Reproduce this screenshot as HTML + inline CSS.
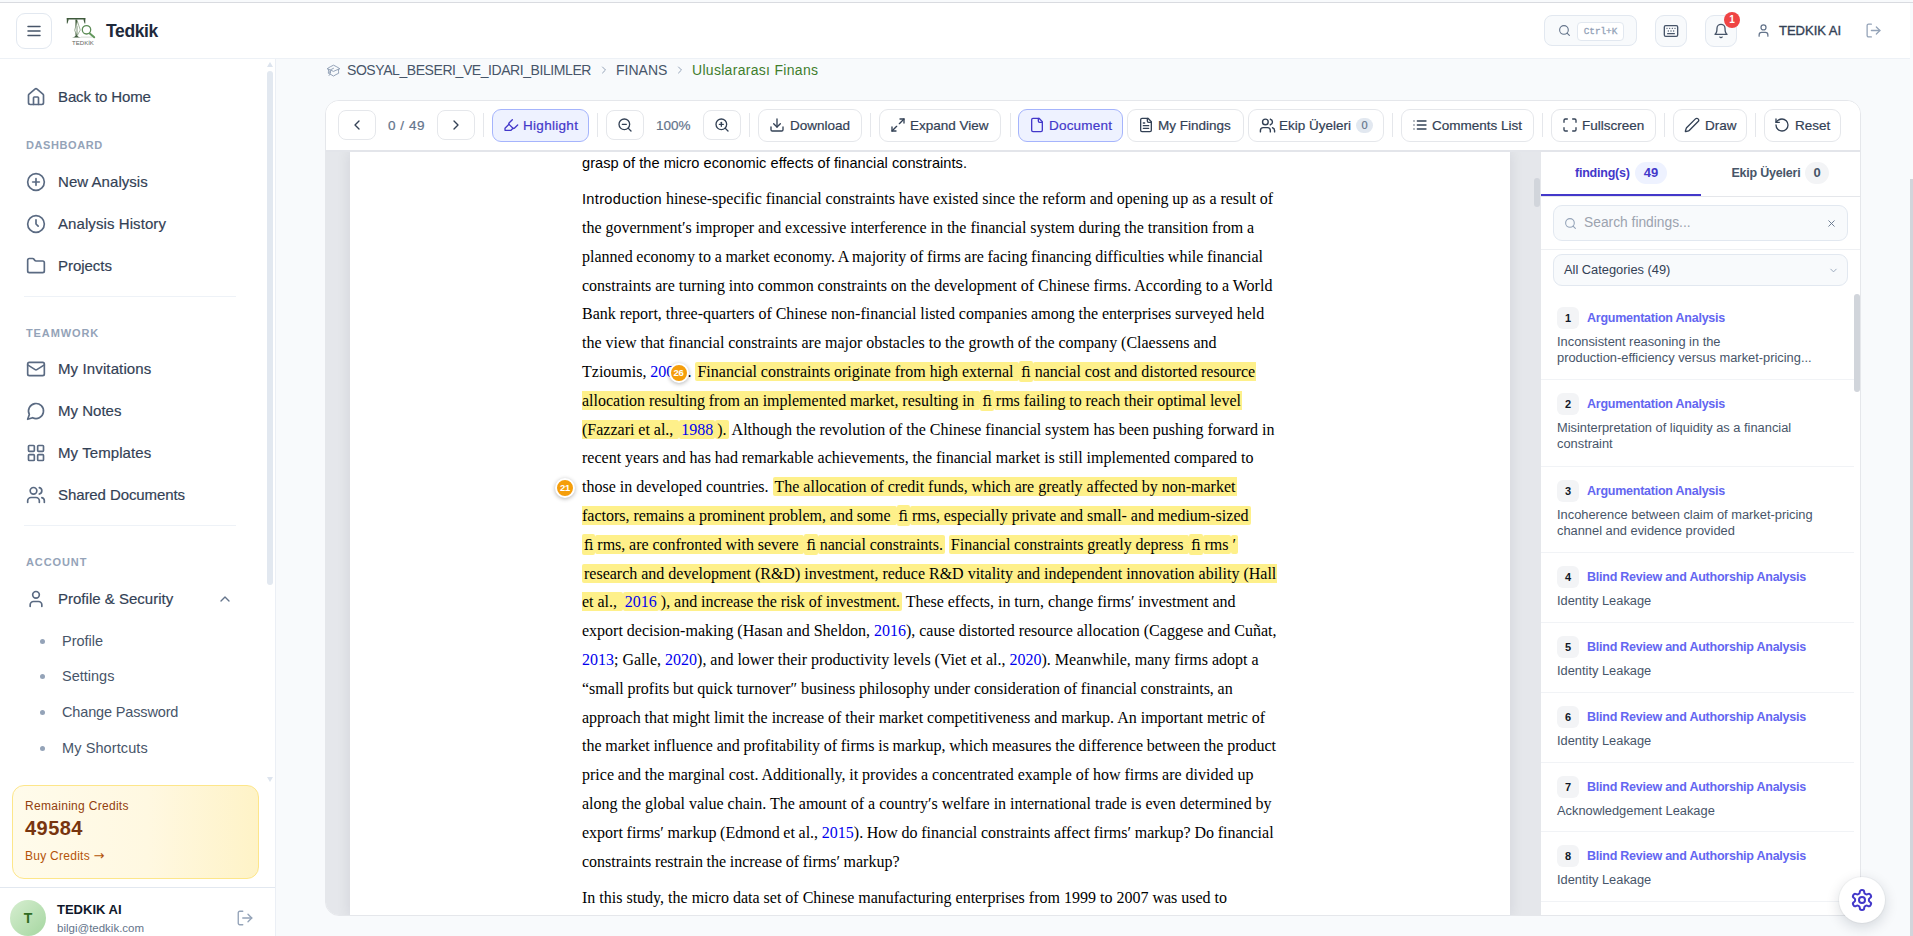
<!DOCTYPE html>
<html lang="en">
<head>
<meta charset="utf-8">
<title>Tedkik</title>
<style>
*{box-sizing:border-box;margin:0;padding:0}
html,body{width:1913px;height:936px;overflow:hidden;background:#f8fafc;font-family:"Liberation Sans",sans-serif;color:#334155}
body{position:relative}
svg{display:block;fill:none;stroke:currentColor;stroke-width:2;stroke-linecap:round;stroke-linejoin:round}
.abs{position:absolute}
.topline{position:absolute;left:0;top:2px;width:1913px;height:1px;background:#d9dbe0}
/* header */
header{position:absolute;left:0;top:3px;width:1910px;height:56px;background:#fff;border-bottom:1px solid #edf1f6}
.hbtn{position:absolute;border:1px solid #e2e8f0;border-radius:9px;background:#fff;color:#475569}
.brand{position:absolute;left:106px;top:16.5px;font-size:17.5px;font-weight:700;color:#1e293b;letter-spacing:-.36px;line-height:22px}
/* sidebar */
aside{position:absolute;left:0;top:59px;width:276px;height:877px;background:#fff;border-right:1px solid #ebeff5}
.nav{position:absolute;left:26px;height:24px;display:flex;align-items:center;color:#334155;font-size:15px;white-space:nowrap;-webkit-text-stroke:.18px #334155}
.nav span{position:relative;top:-1px}
.nav svg{width:20px;height:20px;color:#5a6a82;margin-right:12px;stroke-width:2}
.sect{position:absolute;left:26px;font-size:11px;font-weight:700;letter-spacing:.9px;color:#94a3b8;line-height:12px}
.sep{position:absolute;left:24px;width:212px;height:1px;background:#eef2f7}
.sub{position:absolute;left:62px;font-size:14.5px;color:#475569;line-height:18px;white-space:nowrap}
.sub:before{content:"";position:absolute;left:-22px;top:7px;width:5px;height:5px;border-radius:50%;background:#94a3b8}

/* breadcrumb */
.crumb{position:absolute;top:62px;height:16px;font-size:14px;line-height:16px;color:#475569;white-space:nowrap}
/* card */
.card{position:absolute;left:325px;top:100px;width:1536px;height:816px;background:#fff;border:1px solid #e5e7eb;border-radius:14px;overflow:hidden}
.tb{position:absolute;left:0;top:0;width:1534px;height:51px;border-bottom:2px solid #e3e5ea;background:#fff;z-index:3}
.b{position:absolute;top:8px;height:33px;-webkit-text-stroke:.2px currentColor;border:1px solid #e5e7eb;border-radius:9px;background:#fff;color:#334155;font-size:13.5px;line-height:30px;white-space:nowrap}
.b svg{position:absolute;top:7px;width:16px;height:16px;margin-left:-1px}
.b span{position:absolute;top:1px}
.b.sq{top:9px;height:30px;width:37.5px;border-radius:8px}
.b.sq svg{left:11px;top:6px}
.b.on{background:#eef2ff;border-color:#a5b4fc;color:#4338ca}
.dv{position:absolute;top:12px;width:1px;height:24px;background:#e5e7eb}
.tt{position:absolute;top:16.5px;-webkit-text-stroke:.2px #64748b;font-size:13.5px;line-height:16px;color:#64748b;white-space:nowrap}

/* document */
.doc{position:absolute;left:0;top:50px;width:1214px;height:766px;background:#e5e7eb;overflow:hidden}
.page{position:absolute;left:24px;top:0;width:1160px;height:766px;background:#fff;box-shadow:0 0 14px rgba(15,23,42,.09)}
.para{position:absolute;left:232px;font-family:"Liberation Serif",serif;font-size:16px;line-height:28.8px;color:#000;white-space:nowrap}
.para .sans{font-family:"Liberation Sans",sans-serif;font-size:14.6px;letter-spacing:.04px}
.para .sans.in{letter-spacing:.31px}
.para a{color:#0000ee;text-decoration:none}
mark{background:#fef08a;color:inherit;padding:1px 2px;border-radius:2px}
mark.c0{padding-left:0;border-top-left-radius:0;border-bottom-left-radius:0}
mark.c1{padding-right:1px;border-top-right-radius:0;border-bottom-right-radius:0}
mark.fi{font-family:"DejaVu Serif",serif;font-size:14px;padding:3px 2px 2px}
.pin{position:absolute;width:20px;height:20px;border-radius:50%;background:#f59e0b;border:2px solid #fff;box-shadow:0 1px 4px rgba(0,0,0,.3);color:#fff;font-family:"Liberation Sans",sans-serif;font-size:9.5px;font-weight:700;line-height:16px;text-align:center;letter-spacing:-.3px}
/* findings */
.find{position:absolute;left:1214px;top:50px;width:320px;height:766px;background:#fff;border-left:1px solid #e5e7eb;overflow:hidden}
.tab{position:absolute;top:14px;font-size:12.5px;letter-spacing:-.22px;font-weight:700;line-height:16px;white-space:nowrap}
.pill{position:absolute;top:11px;height:22px;border-radius:11px;font-size:13px;font-weight:700;line-height:22px;text-align:center}
.fi-n{position:absolute;left:16px;width:22px;height:22px;border-radius:6px;background:#f3f4f6;color:#111827;font-size:11px;font-weight:700;line-height:22px;text-align:center}
.fi-t{position:absolute;left:46px;font-size:12.5px;font-weight:700;letter-spacing:-.24px;line-height:16px;color:#6366f1;white-space:nowrap}
.fi-d{position:absolute;left:16px;font-size:12.85px;line-height:16.3px;color:#475569;white-space:nowrap}
.fi-s{position:absolute;left:0;width:313px;height:1px;background:#f1f3f6}
</style>
</head>
<body>
<div class="topline"></div>
<header>
  <div class="hbtn" style="left:16px;top:10px;width:36px;height:36px"><svg viewBox="0 0 24 24" style="width:18px;height:18px;margin:8px"><path d="M4 6h16M4 12h16M4 18h16"/></svg></div>
  <div class="brand">Tedkik</div>

  <svg class="abs logo" viewBox="0 0 30 29" style="left:66px;top:14px;width:30px;height:29px;stroke:none">
    <g fill="#3f5a3c"><rect x=".8" y="1" width="18.5" height="1.5"/><path d="M.8 1v5.6h.7l1.2-4.1zM19.3 1v5.6h-.7l-1.2-4.1z"/><path d="M9.4 2.5h1.9l-.15 16.8h-1.6z"/><path d="M6 20.6c1.6-.3 2.7-.8 3.3-1.5h2.2c.6.7 1.9 1.2 3.8 1.5z"/></g>
    <path d="M11.3 4.6 L8.5 13.4 L11.3 18.4 L14.1 13.4 Z" fill="#fff" fill-opacity=".72" stroke="#7f9879" stroke-width=".7"/>
    <path d="M11.3 9.6V18" stroke="#7f9879" stroke-width=".6"/>
    <path d="M15.3 20.1H26" stroke="#a9b5a6" stroke-width=".5"/>
    <circle cx="20.5" cy="12.8" r="4.2" fill="#fff" fill-opacity=".55" stroke="#5d8c57" stroke-width="1.3"/>
    <path d="M23.8 16.4 L28.2 20.3" stroke="#62985c" stroke-width="2" stroke-linecap="round"/>
    <text x="6" y="27.8" textLength="21.9" lengthAdjust="spacingAndGlyphs" font-family="Liberation Sans, sans-serif" font-size="6" fill="#5f6660">TEDKİK</text>
  </svg>
  <div class="hbtn" style="left:1544px;top:12px;width:93px;height:31px;background:#f8fafc;border-radius:8px">
    <svg viewBox="0 0 24 24" style="position:absolute;left:13px;top:8px;width:13px;height:13px;color:#64748b"><circle cx="11" cy="11" r="8"/><path d="m21 21-4.3-4.3"/></svg>
    <span style="position:absolute;left:32px;top:5.5px;width:47px;height:19px;border:1px solid #e2e8f0;border-radius:4px;background:#fff;font-family:'Liberation Mono',monospace;font-size:9.3px;-webkit-text-stroke:.3px #94a3b8;line-height:18px;text-align:center;color:#94a3b8">Ctrl+K</span>
  </div>
  <div class="hbtn" style="left:1655px;top:12px;width:32px;height:32px;background:#f8fafc;border-radius:9px">
    <svg viewBox="0 0 24 24" style="margin:7px;width:16px;height:16px;color:#475569"><rect width="20" height="16" x="2" y="4" rx="2"/><path d="M6 8h.01M10 8h.01M14 8h.01M18 8h.01M8 12h.01M12 12h.01M16 12h.01M7 16h10"/></svg>
  </div>
  <div class="hbtn" style="left:1705px;top:12px;width:32px;height:32px;background:#f8fafc;border-radius:9px">
    <svg viewBox="0 0 24 24" style="margin:7px;width:16px;height:16px;color:#475569"><path d="M6 8a6 6 0 0 1 12 0c0 7 3 9 3 9H3s3-2 3-9"/><path d="M10.3 21a1.94 1.94 0 0 0 3.4 0"/></svg>
    <span style="position:absolute;left:18px;top:-4px;width:16px;height:16px;border-radius:50%;background:#ef4444;color:#fff;font-size:10px;font-weight:700;line-height:16px;text-align:center">1</span>
  </div>
  <svg class="abs" viewBox="0 0 24 24" style="left:1756px;top:20px;width:15px;height:15px;color:#64748b"><path d="M19 21v-2a4 4 0 0 0-4-4H9a4 4 0 0 0-4 4v2"/><circle cx="12" cy="7" r="4"/></svg>
  <div class="abs" style="left:1779px;top:20px;font-size:13px;font-weight:500;color:#334155;-webkit-text-stroke:.35px #334155;line-height:16px;white-space:nowrap">TEDKIK AI</div>
  <svg class="abs" viewBox="0 0 24 24" style="left:1865px;top:19px;width:17px;height:17px;color:#94a3b8;stroke-width:1.8"><path d="M9 21H5a2 2 0 0 1-2-2V5a2 2 0 0 1 2-2h4"/><path d="m16 17 5-5-5-5"/><path d="M21 12H9"/></svg>
</header>
<aside>
  <div class="nav" style="top:26px"><svg viewBox="0 0 24 24"><path d="M15 21v-8a1 1 0 0 0-1-1h-4a1 1 0 0 0-1 1v8"/><path d="M3 10a2 2 0 0 1 .709-1.528l7-5.999a2 2 0 0 1 2.582 0l7 5.999A2 2 0 0 1 21 10v9a2 2 0 0 1-2 2H5a2 2 0 0 1-2-2z"/></svg><span style="letter-spacing:-0.12px">Back to Home</span></div>
  <div class="sect" style="top:80px;letter-spacing:.58px">DASHBOARD</div>
  <div class="nav" style="top:111px"><svg viewBox="0 0 24 24"><circle cx="12" cy="12" r="10"/><path d="M8 12h8"/><path d="M12 8v8"/></svg><span style="letter-spacing:0.05px">New Analysis</span></div>
  <div class="nav" style="top:153px"><svg viewBox="0 0 24 24"><circle cx="12" cy="12" r="10"/><path d="M12 7v5l2.6 2.6"/></svg><span style="letter-spacing:0.08px">Analysis History</span></div>
  <div class="nav" style="top:195px"><svg viewBox="0 0 24 24"><path d="M20 20a2 2 0 0 0 2-2V8a2 2 0 0 0-2-2h-7.9a2 2 0 0 1-1.69-.9L9.6 3.9A2 2 0 0 0 7.93 3H4a2 2 0 0 0-2 2v13a2 2 0 0 0 2 2Z"/></svg><span style="letter-spacing:-0.03px">Projects</span></div>
  <div class="sep" style="top:237px"></div>
  <div class="sect" style="top:268px">TEAMWORK</div>
  <div class="nav" style="top:298px"><svg viewBox="0 0 24 24"><rect width="20" height="16" x="2" y="4" rx="2"/><path d="m22 7-8.97 5.7a1.94 1.94 0 0 1-2.06 0L2 7"/></svg><span style="letter-spacing:0.12px">My Invitations</span></div>
  <div class="nav" style="top:340px"><svg viewBox="0 0 24 24"><path d="M7.9 20A9 9 0 1 0 4 16.1L2 22Z"/></svg><span style="letter-spacing:0.01px">My Notes</span></div>
  <div class="nav" style="top:382px"><svg viewBox="0 0 24 24"><rect width="7" height="7" x="3" y="3" rx="1"/><rect width="7" height="7" x="14" y="3" rx="1"/><rect width="7" height="7" x="14" y="14" rx="1"/><rect width="7" height="7" x="3" y="14" rx="1"/></svg><span style="letter-spacing:0.09px">My Templates</span></div>
  <div class="nav" style="top:424px"><svg viewBox="0 0 24 24"><path d="M16 21v-2a4 4 0 0 0-4-4H6a4 4 0 0 0-4 4v2"/><circle cx="9" cy="7" r="4"/><path d="M22 21v-2a4 4 0 0 0-3-3.87"/><path d="M16 3.13a4 4 0 0 1 0 7.75"/></svg><span style="letter-spacing:-0.09px">Shared Documents</span></div>
  <div class="sep" style="top:466px"></div>
  <div class="sect" style="top:497px">ACCOUNT</div>
  <div class="nav" style="top:528px"><svg viewBox="0 0 24 24"><path d="M19 21v-2a4 4 0 0 0-4-4H9a4 4 0 0 0-4 4v2"/><circle cx="12" cy="7" r="4"/></svg><span style="letter-spacing:0.01px">Profile &amp; Security</span></div>
  <svg class="abs" viewBox="0 0 24 24" style="left:217px;top:532px;width:16px;height:16px;color:#64748b"><path d="m18 15-6-6-6 6"/></svg>
  <div class="sub" style="top:573px">Profile</div>
  <div class="sub" style="top:608px">Settings</div>
  <div class="sub" style="top:644px;letter-spacing:-0.15px">Change Password</div>
  <div class="sub" style="top:680px;letter-spacing:0.10px">My Shortcuts</div>
  <div class="abs" style="left:267px;top:12px;width:6px;height:514px;border-radius:3px;background:#e2e8f0"></div>
  <div class="abs" style="left:266.5px;top:2.5px;width:0;height:0;border-left:3.5px solid transparent;border-right:3.5px solid transparent;border-bottom:5px solid #dde4ee"></div>
  <div class="abs" style="left:266.5px;top:717.5px;width:0;height:0;border-left:3.5px solid transparent;border-right:3.5px solid transparent;border-top:5px solid #dde4ee"></div>
  <div class="abs credits" style="left:12px;top:726px;width:247px;height:94px;border:1px solid #fde68a;border-radius:12px;background:linear-gradient(90deg,#fffbeb 0%,#fff8e1 55%,#fef3c7 100%)">
    <div class="abs" style="left:12px;top:13px;font-size:12px;letter-spacing:.3px;line-height:14px;color:#92400e;white-space:nowrap">Remaining Credits</div>
    <div class="abs" style="left:12px;top:31px;font-size:20px;font-weight:700;line-height:22px;color:#78350f;letter-spacing:.45px">49584</div>
    <div class="abs" style="left:12px;top:63px;font-size:12px;letter-spacing:.27px;line-height:14px;color:#b45309;white-space:nowrap">Buy Credits <span style="font-family:'DejaVu Sans',sans-serif;font-size:13px;letter-spacing:0">→</span></div>
  </div>
  <div class="abs" style="left:0;top:828px;width:275px;height:1px;background:#e2e8f0"></div>
  <div class="abs" style="left:10px;top:841px;width:36px;height:36px;border-radius:50%;background:linear-gradient(135deg,#d6eed0,#a5d6a0);color:#2f6b22;font-size:14px;font-weight:700;line-height:36px;text-align:center">T</div>
  <div class="abs" style="left:57px;top:843px;font-size:13px;font-weight:700;line-height:15px;color:#0f172a;white-space:nowrap">TEDKIK AI</div>
  <div class="abs" style="left:57px;top:862px;font-size:11.5px;line-height:14px;color:#64748b;white-space:nowrap">bilgi@tedkik.com</div>
  <svg class="abs" viewBox="0 0 24 24" style="left:236px;top:850px;width:18px;height:18px;color:#94a3b8;stroke-width:1.8"><path d="M9 21H5a2 2 0 0 1-2-2V5a2 2 0 0 1 2-2h4"/><path d="m16 17 5-5-5-5"/><path d="M21 12H9"/></svg>
</aside>
<nav class="crumbs">
  <svg class="abs" viewBox="0 0 24 24" style="left:325.5px;top:62.5px;width:15px;height:15px;color:#94a3b8;stroke-width:1.6"><path d="M4.26 10.147a60.438 60.438 0 0 0-.491 6.347A48.62 48.62 0 0 1 12 20.904a48.62 48.62 0 0 1 8.232-4.41 60.46 60.46 0 0 0-.491-6.347m-15.482 0a50.636 50.636 0 0 0-2.658-.813A59.906 59.906 0 0 1 12 3.493a59.903 59.903 0 0 1 10.399 5.84c-.896.248-1.783.52-2.658.814m-15.482 0A50.717 50.717 0 0 1 12 13.489a50.702 50.702 0 0 1 7.74-3.342M6.75 15a.75.75 0 1 0 0-1.5.75.75 0 0 0 0 1.5Zm0 0v-3.675A55.378 55.378 0 0 1 12 8.443m-7.007 11.55A5.981 5.981 0 0 0 6.75 15.75v-1.5"/></svg>
  <div class="crumb" style="left:347px;letter-spacing:-.43px">SOSYAL_BESERI_VE_IDARI_BILIMLER</div>
  <svg class="abs" viewBox="0 0 24 24" style="left:598px;top:64px;width:12px;height:12px;color:#94a3b8"><path d="m9 18 6-6-6-6"/></svg>
  <div class="crumb" style="left:616px">FINANS</div>
  <svg class="abs" viewBox="0 0 24 24" style="left:674px;top:64px;width:12px;height:12px;color:#94a3b8"><path d="m9 18 6-6-6-6"/></svg>
  <div class="crumb" style="left:692px;color:#3f7d2c;letter-spacing:.3px">Uluslararası Finans</div>
</nav>
<main class="card">
  <div class="tb">
    <div class="b sq" style="left:12px"><svg viewBox="0 0 24 24"><path d="m15 18-6-6 6-6"/></svg></div>
    <div class="tt" style="left:62px;letter-spacing:.55px">0 / 49</div>
    <div class="b sq" style="left:111px"><svg viewBox="0 0 24 24"><path d="m9 18 6-6-6-6"/></svg></div>
    <div class="dv" style="left:157px"></div>
    <div class="b on" style="left:166px;width:97px"><svg viewBox="0 0 24 24" style="left:11px"><path d="m9 11-6 6v3h9l3-3"/><path d="m22 12-4.6 4.6a2 2 0 0 1-2.8 0l-5.2-5.2a2 2 0 0 1 0-2.8L14 4"/></svg><span style="left:30px;letter-spacing:.3px">Highlight</span></div>
    <div class="dv" style="left:271px"></div>
    <div class="b sq" style="left:280px"><svg viewBox="0 0 24 24"><circle cx="11" cy="11" r="8"/><path d="m21 21-4.35-4.35"/><path d="M8 11h6"/></svg></div>
    <div class="tt" style="left:330px">100%</div>
    <div class="b sq" style="left:377px"><svg viewBox="0 0 24 24"><circle cx="11" cy="11" r="8"/><path d="m21 21-4.35-4.35"/><path d="M8 11h6"/><path d="M11 8v6"/></svg></div>
    <div class="dv" style="left:423px"></div>
    <div class="b " style="left:432px;width:104px"><svg viewBox="0 0 24 24" style="left:11px"><path d="M21 15v4a2 2 0 0 1-2 2H5a2 2 0 0 1-2-2v-4"/><path d="m7 10 5 5 5-5"/><path d="M12 15V3"/></svg><span style="left:31px">Download</span></div>
    <div class="dv" style="left:544px"></div>
    <div class="b " style="left:553px;width:122px"><svg viewBox="0 0 24 24" style="left:11px"><path d="M15 3h6v6"/><path d="M9 21H3v-6"/><path d="M21 3l-7 7"/><path d="M3 21l7-7"/></svg><span style="left:30px">Expand View</span></div>
    <div class="dv" style="left:684px"></div>
    <div class="b on" style="left:692px;width:105px"><svg viewBox="0 0 24 24" style="left:11px"><path d="M15 2H6a2 2 0 0 0-2 2v16a2 2 0 0 0 2 2h12a2 2 0 0 0 2-2V7Z"/><path d="M14 2v4a2 2 0 0 0 2 2h4"/></svg><span style="left:30px;letter-spacing:.2px">Document</span></div>
    <div class="b " style="left:801px;width:117px"><svg viewBox="0 0 24 24" style="left:11px"><path d="M15 2H6a2 2 0 0 0-2 2v16a2 2 0 0 0 2 2h12a2 2 0 0 0 2-2V7Z"/><path d="M14 2v4a2 2 0 0 0 2 2h4"/><path d="M10 9H8"/><path d="M16 13H8"/><path d="M16 17H8"/></svg><span style="left:30px">My Findings</span></div>
    <div class="b " style="left:922px;width:136px"><svg viewBox="0 0 24 24" style="left:10.5px;top:7px;width:17px;height:17px"><path d="M16 21v-2a4 4 0 0 0-4-4H6a4 4 0 0 0-4 4v2"/><circle cx="9" cy="7" r="4"/><path d="M22 21v-2a4 4 0 0 0-3-3.87"/><path d="M16 3.13a4 4 0 0 1 0 7.75"/></svg><span style="left:30px">Ekip Üyeleri</span><i style="position:absolute;left:107px;top:8px;width:17px;height:15px;border-radius:8px;background:#e2e8f0;color:#64748b;font-size:11px;font-style:normal;font-weight:400;-webkit-text-stroke:.2px #64748b;line-height:15.5px;text-align:center">0</i></div>
    <div class="dv" style="left:1066px"></div>
    <div class="b " style="left:1075px;width:133px"><svg viewBox="0 0 24 24" style="left:11px"><path d="M8 6h13M8 12h13M8 18h13M3 6h.01M3 12h.01M3 18h.01"/></svg><span style="left:30px">Comments List</span></div>
    <div class="dv" style="left:1216px"></div>
    <div class="b " style="left:1225px;width:105px"><svg viewBox="0 0 24 24" style="left:11px"><path d="M8 3H5a2 2 0 0 0-2 2v3"/><path d="M21 8V5a2 2 0 0 0-2-2h-3"/><path d="M3 16v3a2 2 0 0 0 2 2h3"/><path d="M16 21h3a2 2 0 0 0 2-2v-3"/></svg><span style="left:30px">Fullscreen</span></div>
    <div class="dv" style="left:1338px"></div>
    <div class="b " style="left:1347px;width:74px"><svg viewBox="0 0 24 24" style="left:11px"><path d="M21.174 6.812a1 1 0 0 0-3.986-3.987L3.842 16.174a2 2 0 0 0-.5.83l-1.321 4.352a.5.5 0 0 0 .623.622l4.353-1.32a2 2 0 0 0 .83-.497z"/></svg><span style="left:31px">Draw</span></div>
    <div class="dv" style="left:1429px"></div>
    <div class="b " style="left:1438px;width:77px"><svg viewBox="0 0 24 24" style="left:10px"><path d="M3 12a9 9 0 1 0 9-9 9.75 9.75 0 0 0-6.74 2.74L3 8"/><path d="M3 3v5h5"/></svg><span style="left:30px">Reset</span></div>
  </div>
  <section class="doc">
    <article class="page">
      <p class="para" style="top:-2.4px"><span class="sans">grasp of the micro economic effects of financial constraints.</span></p>
      <p class="para" style="top:34.2px">
        <span class="ln" id="L1" style="word-spacing:-0.097px"><span class="sans in">Introduction</span> hinese-specific financial constraints have existed since the reform and opening up as a result of</span><br>
        <span class="ln" id="L2" style="word-spacing:-0.093px">the government′s improper and excessive interference in the financial system during the transition from a</span><br>
        <span class="ln" id="L3" style="word-spacing:-0.364px">planned economy to a market economy. A majority of firms are facing financing difficulties while financial</span><br>
        <span class="ln" id="L4" style="word-spacing:-0.081px">constraints are turning into common constraints on the development of Chinese firms. According to a World</span><br>
        <span class="ln" id="L5" style="word-spacing:-0.123px">Bank report, three-quarters of Chinese non-financial listed companies among the enterprises surveyed held</span><br>
        <span class="ln" id="L6" style="word-spacing:-0.087px">the view that financial constraints are major obstacles to the growth of the company (Claessens and</span><br>
        <span class="ln" id="L7" style="word-spacing:-0.163px">Tzioumis, <a>2006</a>). <mark>Financial constraints originate from high external </mark><mark class="fi">ﬁ</mark><mark class="c1">nancial cost and distorted resource</mark></span><br>
        <span class="ln" id="L8" style="word-spacing:-0.154px"><mark class="c0">allocation resulting from an implemented market, resulting in </mark><mark class="fi">ﬁ</mark><mark class="c1">rms failing to reach their optimal level</mark></span><br>
        <span class="ln" id="L9" style="word-spacing:-0.089px"><mark class="c0">(Fazzari et al., </mark><mark><a>1988</a></mark><mark>).</mark> Although the revolution of the Chinese financial system has been pushing forward in</span><br>
        <span class="ln" id="L10" style="word-spacing:-0.119px">recent years and has had remarkable achievements, the financial market is still implemented compared to</span><br>
        <span class="ln" id="L11" style="word-spacing:-0.030px">those in developed countries. <mark class="c1">The allocation of credit funds, which are greatly affected by non-market</mark></span><br>
        <span class="ln" id="L12" style="word-spacing:-0.102px"><mark class="c0">factors, remains a prominent problem, and some </mark><mark class="fi">ﬁ</mark><mark>rms, especially private and small- and medium-sized</mark></span><br>
        <span class="ln" id="L13" style="word-spacing:-0.223px"><mark class="fi">ﬁ</mark><mark>rms, are confronted with severe </mark><mark class="fi">ﬁ</mark><mark>nancial constraints.</mark> <mark>Financial constraints greatly depress </mark><mark class="fi">ﬁ</mark><mark>rms</mark><mark>′</mark></span><br>
        <span class="ln" id="L14" style="word-spacing:-0.034px"><mark class="c1">research and development (R&amp;D) investment, reduce R&amp;D vitality and independent innovation ability (Hall</mark></span><br>
        <span class="ln" id="L15" style="word-spacing:-0.118px"><mark class="c0">et al., </mark><mark><a>2016</a></mark><mark>), and increase the risk of investment.</mark> These effects, in turn, change firms′ investment and</span><br>
        <span class="ln" id="L16" style="word-spacing:-0.072px">export decision-making (Hasan and Sheldon, <a>2016</a>), cause distorted resource allocation (Caggese and Cuñat,</span><br>
        <span class="ln" id="L17" style="word-spacing:-0.031px"><a>2013</a>; Galle, <a>2020</a>), and lower their productivity levels (Viet et al., <a>2020</a>). Meanwhile, many firms adopt a</span><br>
        <span class="ln" id="L18" style="word-spacing:-0.283px">“small profits but quick turnover″ business philosophy under consideration of financial constraints, an</span><br>
        <span class="ln" id="L19" style="word-spacing:-0.017px">approach that might limit the increase of their market competitiveness and markup. An important metric of</span><br>
        <span class="ln" id="L20" style="word-spacing:-0.275px">the market influence and profitability of firms is markup, which measures the difference between the product</span><br>
        <span class="ln" id="L21" style="word-spacing:-0.109px">price and the marginal cost. Additionally, it provides a concentrated example of how firms are divided up</span><br>
        <span class="ln" id="L22" style="word-spacing:-0.028px">along the global value chain. The amount of a country′s welfare in international trade is even determined by</span><br>
        <span class="ln" id="L23" style="word-spacing:-0.313px">export firms′ markup (Edmond et al., <a>2015</a>). How do financial constraints affect firms′ markup? Do financial</span><br>
        <span class="ln" id="L24" style="word-spacing:-0.388px">constraints restrain the increase of firms′ markup?</span><br>
      </p>
      <p class="para" style="top:732.6px">In this study, the micro data set of Chinese manufacturing enterprises from 1999 to 2007 was used to</p>
      <div class="pin" style="left:318.5px;top:212px">26</div>
      <div class="pin" style="left:205px;top:327px">21</div>
    </article>
    <div class="abs" style="left:1207.5px;top:27px;width:6px;height:29px;border-radius:3px;background:#d1d5db"></div>
  </section>
  <section class="find">
    <div class="tab" style="left:34px;color:#4338ca">finding(s)</div>
    <div class="pill" style="left:94px;width:32px;background:#eef2ff;color:#4338ca">49</div>
    <div class="tab" style="left:190.5px;color:#475569">Ekip Üyeleri</div>
    <div class="pill" style="left:264px;width:24px;background:#f3f4f6;color:#475569">0</div>
    <div class="abs" style="left:0;top:45px;width:320px;height:1px;background:#e5e7eb"></div>
    <div class="abs" style="left:0;top:43px;width:160px;height:2px;background:#4338ca"></div>
    <div class="abs" style="left:12px;top:54px;width:295px;height:36px;border:1px solid #e2e8f0;border-radius:9px;background:#f8fafc">
      <svg viewBox="0 0 24 24" style="position:absolute;left:10px;top:11px;width:13px;height:13px;color:#94a3b8"><circle cx="11" cy="11" r="8"/><path d="m21 21-4.3-4.3"/></svg>
      <span style="position:absolute;left:30px;top:9px;font-size:13.8px;line-height:16px;color:#9ca3af;white-space:nowrap">Search findings...</span>
      <svg viewBox="0 0 24 24" style="position:absolute;left:272px;top:12px;width:11px;height:11px;color:#64748b"><path d="M18 6 6 18M6 6l12 12"/></svg>
    </div>
    <div class="abs" style="left:0;top:98px;width:320px;height:1px;background:#eef0f3"></div>
    <div class="abs" style="left:12px;top:103px;width:295px;height:32px;border:1px solid #e2e8f0;border-radius:9px;background:#f8fafc">
      <span style="position:absolute;left:10px;top:7px;font-size:12.85px;line-height:16px;color:#334155;white-space:nowrap">All Categories (49)</span>
      <svg viewBox="0 0 24 24" style="position:absolute;left:274px;top:10px;width:11px;height:11px;color:#94a3b8"><path d="m6 9 6 6 6-6"/></svg>
    </div>
    <div class="abs" style="left:313px;top:143px;width:6px;height:98px;border-radius:3px;background:#d1d5db"></div>
    <div class="fi-n" style="top:155.6px">1</div><div class="fi-t" style="top:158.6px">Argumentation Analysis</div>
    <div class="fi-d" style="top:182.6px">Inconsistent reasoning in the</div>
    <div class="fi-d" style="top:198.9px">production-efficiency versus market-pricing...</div>
    <div class="fi-s" style="top:227.8px"></div>
    <div class="fi-n" style="top:242.0px">2</div><div class="fi-t" style="top:245.0px">Argumentation Analysis</div>
    <div class="fi-d" style="top:269.0px">Misinterpretation of liquidity as a financial</div>
    <div class="fi-d" style="top:285.3px">constraint</div>
    <div class="fi-s" style="top:314.9px"></div>
    <div class="fi-n" style="top:328.6px">3</div><div class="fi-t" style="top:331.6px">Argumentation Analysis</div>
    <div class="fi-d" style="top:355.6px">Incoherence between claim of market-pricing</div>
    <div class="fi-d" style="top:371.9px">channel and evidence provided</div>
    <div class="fi-s" style="top:401.0px"></div>
    <div class="fi-n" style="top:414.7px">4</div><div class="fi-t" style="top:417.7px">Blind Review and Authorship Analysis</div>
    <div class="fi-d" style="top:441.7px">Identity Leakage</div>
    <div class="fi-s" style="top:470.7px"></div>
    <div class="fi-n" style="top:484.5px">5</div><div class="fi-t" style="top:487.5px">Blind Review and Authorship Analysis</div>
    <div class="fi-d" style="top:511.5px">Identity Leakage</div>
    <div class="fi-s" style="top:540.9px"></div>
    <div class="fi-n" style="top:554.8px">6</div><div class="fi-t" style="top:557.8px">Blind Review and Authorship Analysis</div>
    <div class="fi-d" style="top:581.8px">Identity Leakage</div>
    <div class="fi-s" style="top:610.9px"></div>
    <div class="fi-n" style="top:624.6px">7</div><div class="fi-t" style="top:627.6px">Blind Review and Authorship Analysis</div>
    <div class="fi-d" style="top:651.6px">Acknowledgement Leakage</div>
    <div class="fi-s" style="top:680.3px"></div>
    <div class="fi-n" style="top:693.7px">8</div><div class="fi-t" style="top:696.7px">Blind Review and Authorship Analysis</div>
    <div class="fi-d" style="top:720.7px">Identity Leakage</div>
    <div class="fi-s" style="top:749.8px"></div>
  </section>
</main>
<div class="abs fab" style="left:1839px;top:877px;width:46px;height:46px;border-radius:50%;background:#fff;box-shadow:0 4px 14px rgba(15,23,42,.16),0 0 0 1px rgba(15,23,42,.03)"><svg viewBox="0 0 24 24" style="margin:11px;width:24px;height:24px;color:#4338ca"><path d="M12.22 2h-.44a2 2 0 0 0-2 2v.18a2 2 0 0 1-1 1.73l-.43.25a2 2 0 0 1-2 0l-.15-.08a2 2 0 0 0-2.73.73l-.22.38a2 2 0 0 0 .73 2.73l.15.1a2 2 0 0 1 1 1.72v.51a2 2 0 0 1-1 1.74l-.15.09a2 2 0 0 0-.73 2.73l.22.38a2 2 0 0 0 2.73.73l.15-.08a2 2 0 0 1 2 0l.43.25a2 2 0 0 1 1 1.73V20a2 2 0 0 0 2 2h.44a2 2 0 0 0 2-2v-.18a2 2 0 0 1 1-1.73l.43-.25a2 2 0 0 1 2 0l.15.08a2 2 0 0 0 2.73-.73l.22-.39a2 2 0 0 0-.73-2.73l-.15-.08a2 2 0 0 1-1-1.74v-.5a2 2 0 0 1 1-1.74l.15-.09a2 2 0 0 0 .73-2.73l-.22-.38a2 2 0 0 0-2.73-.73l-.15.08a2 2 0 0 1-2 0l-.43-.25a2 2 0 0 1-1-1.73V4a2 2 0 0 0-2-2z"/><circle cx="12" cy="12" r="3"/></svg></div>
<div class="abs" style="left:1910px;top:179px;width:3px;height:757px;background:#d1d5db"></div>
</body>
</html>
